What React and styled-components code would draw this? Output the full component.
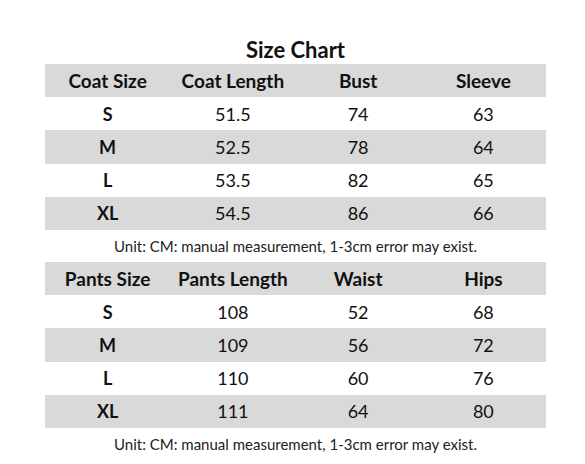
import React from 'react';
import styled, { createGlobalStyle } from 'styled-components';

const GlobalStyle = createGlobalStyle`
  body {
    margin: 0;
    background: #ffffff;
  }
`;

const Page = styled.div`
  box-sizing: border-box;
  width: 585px;
  height: 464px;
  padding: 36px 39px 0 45px;
  font-family: Lato, "Open Sans", sans-serif;
  color: #111111;
`;

const Title = styled.div`
  height: 28px;
  line-height: 28px;
  text-align: center;
  font-size: 22px;
  font-weight: 700;
`;

const Row = styled.div`
  display: grid;
  grid-template-columns: repeat(4, 1fr);
  height: 33.2px;
  align-items: center;
  background: ${(p) => (p.$shade ? '#d9d9d9' : '#ffffff')};
`;

const Cell = styled.div`
  text-align: center;
  font-size: ${(p) => (p.$head ? '19px' : '18px')};
  font-weight: ${(p) => (p.$bold ? 700 : 400)};
`;

const Note = styled.div`
  height: 32px;
  line-height: 32px;
  text-align: center;
  font-size: 15px;
  color: #222222;
`;

const coat = {
  head: ['Coat Size', 'Coat Length', 'Bust', 'Sleeve'],
  rows: [
    ['S', '51.5', '74', '63'],
    ['M', '52.5', '78', '64'],
    ['L', '53.5', '82', '65'],
    ['XL', '54.5', '86', '66'],
  ],
};

const pants = {
  head: ['Pants Size', 'Pants Length', 'Waist', 'Hips'],
  rows: [
    ['S', '108', '52', '68'],
    ['M', '109', '56', '72'],
    ['L', '110', '60', '76'],
    ['XL', '111', '64', '80'],
  ],
};

const Chart = ({ data }) => (
  <>
    <Row $shade>
      {data.head.map((h) => (
        <Cell key={h} $bold $head>{h}</Cell>
      ))}
    </Row>
    {data.rows.map((r, i) => (
      <Row key={r[0]} $shade={i % 2 === 1}>
        {r.map((v, j) => (
          <Cell key={j} $bold={j === 0}>{v}</Cell>
        ))}
      </Row>
    ))}
    <Note>Unit: CM: manual measurement, 1-3cm error may exist.</Note>
  </>
);

export default function App() {
  return (
    <Page>
      <GlobalStyle />
      <Title>Size Chart</Title>
      <Chart data={coat} />
      <Chart data={pants} />
    </Page>
  );
}
